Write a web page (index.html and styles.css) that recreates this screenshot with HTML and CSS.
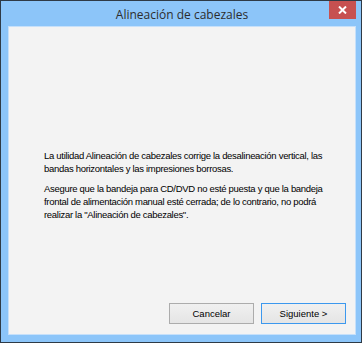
FILE: index.html
```html
<!DOCTYPE html>
<html lang="es">
<head>
    <meta charset="UTF-8">
    <title>Alineación de cabezales</title>
    <link rel="stylesheet" href="styles.css">
</head>
<body>
    <div class="window">
        <div class="titlebar">
            <span></span>
            <span class="title">Alineación de cabezales</span>
            <button class="close">
                <svg width="9" height="8" viewBox="0 0 9 8"><path d="M1 0.5 L8 7.5 M8 0.5 L1 7.5" stroke="#fff" stroke-width="2"/></svg>
            </button>
        </div>
        <div class="client">
            <div class="message">
                <p>La utilidad Alineación de cabezales corrige la desalineación vertical, las bandas horizontales y las impresiones borrosas.</p>
                <p>Asegure que la bandeja para CD/DVD no esté puesta y que la bandeja frontal de alimentación manual esté cerrada; de lo contrario, no podrá realizar la "Alineación de cabezales".</p>
            </div>
            <div class="buttons">
                <button class="btn">Cancelar</button>
                <button class="btn default">Siguiente &gt;</button>
            </div>
        </div>
    </div>
</body>
</html>
```

FILE: styles.css
```css
html, body {
    margin: 0;
    padding: 0;
}

.window {
    box-sizing: border-box;
    width: 362px;
    height: 343px;
    border: 1px solid #2e3a46;
    background-color: #8cc5f9;
    padding: 0 5px 7px 7px;
    display: flex;
    flex-direction: column;
    font-family: "Liberation Sans", Arial, sans-serif;
}

.titlebar {
    height: 25px;
    display: grid;
    grid-template-columns: 1fr auto 1fr;
    align-items: start;
}

.title {
    font-family: "Open Sans", "Noto Sans", sans-serif;
    font-size: 12px;
    color: #2d2d2d;
    line-height: 27px;
}

.close {
    justify-self: end;
    width: 27px;
    height: 18px;
    border: none;
    padding: 0;
    background-color: #c75050;
    display: flex;
    align-items: center;
    justify-content: center;
}

.client {
    flex: 1;
    background-color: #f3f3f3;
    border: 1px solid #c6e0fa;
    display: flex;
    flex-direction: column;
    padding: 0 9px 10px 35px;
}

.message {
    margin-top: 122px;
    font-size: 9.5px;
    letter-spacing: -0.3px;
    line-height: 13px;
    color: #000;
}

.message p {
    margin: 0 0 7px 0;
}

.buttons {
    margin-top: auto;
    display: flex;
    justify-content: flex-end;
    gap: 7px;
}

.btn {
    width: 85px;
    height: 21px;
    font-family: "Liberation Sans", Arial, sans-serif;
    font-size: 9.5px;
    color: #000;
    border: 1px solid #acacac;
    background: linear-gradient(#f0f0f0, #e5e5e5);
    padding: 0;
}

.btn.default {
    border-color: #3c98ee;
}
```
